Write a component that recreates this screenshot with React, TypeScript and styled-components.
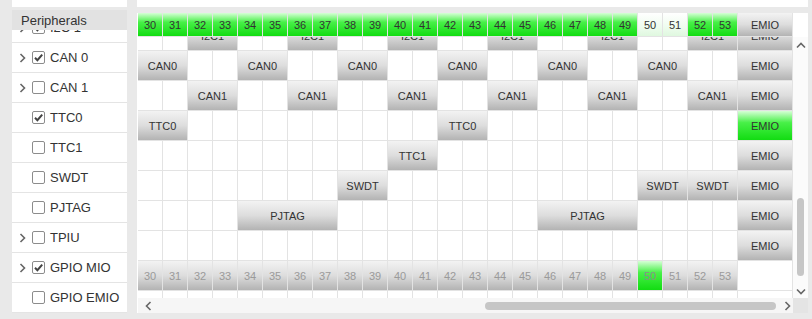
import styled, { createGlobalStyle, css } from "styled-components";

type Tone = "gray" | "green" | "pale" | "muted" | "mutedGreen";

type Seg = {
  at: number;
  span: number;
  label: string;
  tone?: Tone;
};

type GridRow = {
  segs: Seg[];
  emio: Tone | null;
};

type Periph = {
  name: string;
  checked: boolean;
  expandable: boolean;
};

const FIRST_PIN = 30;
const PIN_COUNT = 24;
const pins = Array.from({ length: PIN_COUNT }, (_, i) => FIRST_PIN + i);

const pairs = (start: number, label: string): Seg[] =>
  [0, 4, 8, 12, 16, 20].map((o) => ({ at: start + o, span: 2, label }));

const gridRows: GridRow[] = [
  { segs: pairs(32, "I2C1"), emio: "gray" },
  { segs: pairs(30, "CAN0"), emio: "gray" },
  { segs: pairs(32, "CAN1"), emio: "gray" },
  {
    segs: [
      { at: 30, span: 2, label: "TTC0" },
      { at: 42, span: 2, label: "TTC0" },
    ],
    emio: "green",
  },
  { segs: [{ at: 40, span: 2, label: "TTC1" }], emio: "gray" },
  {
    segs: [
      { at: 38, span: 2, label: "SWDT" },
      { at: 50, span: 2, label: "SWDT" },
      { at: 52, span: 2, label: "SWDT" },
    ],
    emio: "gray",
  },
  {
    segs: [
      { at: 34, span: 4, label: "PJTAG" },
      { at: 46, span: 4, label: "PJTAG" },
    ],
    emio: "gray",
  },
  { segs: [], emio: "gray" },
  {
    segs: pins.map((p) => ({
      at: p,
      span: 1,
      label: String(p),
      tone: p === 50 ? "mutedGreen" : "muted",
    })),
    emio: null,
  },
  { segs: [], emio: null },
];

const peripherals: Periph[] = [
  { name: "I2C 1", checked: true, expandable: true },
  { name: "CAN 0", checked: true, expandable: true },
  { name: "CAN 1", checked: false, expandable: true },
  { name: "TTC0", checked: true, expandable: false },
  { name: "TTC1", checked: false, expandable: false },
  { name: "SWDT", checked: false, expandable: false },
  { name: "PJTAG", checked: false, expandable: false },
  { name: "TPIU", checked: false, expandable: true },
  { name: "GPIO MIO", checked: true, expandable: true },
  { name: "GPIO EMIO", checked: false, expandable: false },
];

const GlobalStyle = createGlobalStyle`
  html, body {
    margin: 0;
    padding: 0;
    background: #e9e9e9;
  }
  body {
    font-family: "Liberation Sans", Arial, sans-serif;
    color: #333;
  }
  * {
    box-sizing: border-box;
  }
`;

const Page = styled.div`
  display: flex;
  width: 812px;
  height: 319px;
  padding-left: 12px;
  background: #e9e9e9;
  overflow: hidden;
`;

const Sidebar = styled.div`
  display: flex;
  flex-direction: column;
  width: 115px;
  margin-right: 10px;
`;

const TopStrip = styled.div<{ $gap: number }>`
  height: 7px;
  flex-shrink: 0;
  background: #fff;
  margin-bottom: ${(p) => p.$gap}px;
`;

const SideHeader = styled.div`
  height: 20px;
  flex-shrink: 0;
  padding-left: 9px;
  display: flex;
  align-items: center;
  font-size: 13px;
  background: #e2e2e2;
  color: #333;
  position: relative;
  z-index: 1;
`;

const SideList = styled.div`
  height: 283px;
  background: #fff;
  overflow: hidden;
`;

const SideRows = styled.div`
  margin-top: -17px;
`;

const SideRow = styled.div`
  height: 30px;
  display: flex;
  align-items: center;
  padding-left: 7px;
  border-bottom: 1px solid #e4e4e4;
  font-size: 13px;
  color: #333;
`;

const ChevronSlot = styled.span`
  width: 13px;
  display: flex;
  align-items: center;
`;

const Box = styled.span`
  width: 13px;
  height: 13px;
  border: 1px solid #8c8c8c;
  border-radius: 2px;
  background: #fff;
  display: flex;
  align-items: center;
  justify-content: center;
  margin-right: 5px;
  flex-shrink: 0;
`;

const Main = styled.div`
  display: flex;
  flex-direction: column;
  width: 671px;
`;

const Panel = styled.div`
  display: flex;
  flex-direction: column;
  height: 300px;
  padding-left: 1px;
  background: #fff;
`;

const HeadLine = styled.div`
  display: flex;
  height: 24px;
  position: relative;
  z-index: 1;
`;

const Middle = styled.div`
  display: flex;
  height: 261px;
`;

const Viewport = styled.div`
  width: 655px;
  overflow: hidden;
`;

const Rows = styled.div`
  margin-top: -16px;
`;

const Row = styled.div<{ $h: number }>`
  display: grid;
  grid-template-columns: repeat(${PIN_COUNT}, 25px) 55px;
  height: ${(p) => p.$h}px;
`;

const tones: Record<Tone, ReturnType<typeof css>> = {
  gray: css`
    background: linear-gradient(#f3f3f3 0%, #dddddd 50%, #b3b3b3 100%);
    color: #333;
  `,
  green: css`
    background: linear-gradient(#d6ffd6 0%, #48f048 40%, #12dc12 100%);
    color: #333;
  `,
  pale: css`
    background: linear-gradient(#ffffff 0%, #eefcee 60%, #dff8df 100%);
    color: #333;
  `,
  muted: css`
    background: linear-gradient(#f3f3f3 0%, #dddddd 50%, #b3b3b3 100%);
    color: #9a9a9a;
  `,
  mutedGreen: css`
    background: linear-gradient(#d6ffd6 0%, #48f048 40%, #12dc12 100%);
    color: #8c8c8c;
  `,
};

const Cell = styled.div<{ $span?: number; $tone?: Tone | null }>`
  grid-column: span ${(p) => p.$span ?? 1};
  display: flex;
  align-items: center;
  justify-content: center;
  font-size: 11px;
  border-right: 1px solid #e3e3e3;
  border-bottom: 1px solid #e3e3e3;
  background: #fff;
  white-space: nowrap;
  overflow: hidden;
  ${(p) => p.$tone && tones[p.$tone]}
`;

const VScroll = styled.div`
  width: 15px;
  display: flex;
  flex-direction: column;
  align-items: center;
  background: #fbfbfb;
  padding: 5px 0 3px;
`;

const VThumb = styled.div`
  width: 7px;
  height: 78px;
  border-radius: 4px;
  background: #c6c6c6;
  margin-top: auto;
  margin-bottom: 12px;
`;

const Bottom = styled.div`
  display: flex;
  height: 15px;
`;

const HScroll = styled.div`
  width: 655px;
  display: flex;
  align-items: center;
  padding: 0 2px 0 7px;
  background: #f6f6f6;
`;

const HThumb = styled.div`
  width: 291px;
  height: 8px;
  border-radius: 4px;
  background: #c6c6c6;
  margin-left: auto;
  margin-right: 8px;
`;

const Corner = styled.div`
  width: 15px;
  background: #e4e4e4;
`;

const Chevron = ({ dir }: { dir: "up" | "down" | "left" | "right" }) => {
  const pts = {
    right: "1.5,1 5.5,5 1.5,9",
    left: "5.5,1 1.5,5 5.5,9",
    up: "1,5.5 5,1.5 9,5.5",
    down: "1,1.5 5,5.5 9,1.5",
  }[dir];
  const horiz = dir === "left" || dir === "right";
  return (
    <svg width={horiz ? 7 : 10} height={horiz ? 10 : 7} viewBox={horiz ? "0 0 7 10" : "0 0 10 7"}>
      <polyline points={pts} fill="none" stroke="#666" strokeWidth={1.6} />
    </svg>
  );
};

const Check = () => (
  <svg width="11" height="11" viewBox="0 0 11 11">
    <path d="M2 5.8 L4.4 8.2 L9.2 2.6" fill="none" stroke="#444" strokeWidth={2} />
  </svg>
);

const GridLine = ({ row, h }: { row: GridRow; h: number }) => {
  const cells = [];
  let p = FIRST_PIN;
  while (p < FIRST_PIN + PIN_COUNT) {
    const seg = row.segs.find((s) => s.at === p);
    if (seg) {
      cells.push(
        <Cell key={p} $span={seg.span} $tone={seg.tone ?? "gray"}>
          {seg.label}
        </Cell>
      );
      p += seg.span;
    } else {
      cells.push(<Cell key={p} />);
      p += 1;
    }
  }
  return (
    <Row $h={h}>
      {cells}
      <Cell $tone={row.emio}>{row.emio ? "EMIO" : ""}</Cell>
    </Row>
  );
};

const headerRow: GridRow = {
  segs: pins.map((p) => ({
    at: p,
    span: 1,
    label: String(p),
    tone: p === 50 || p === 51 ? "pale" : "green",
  })),
  emio: "gray",
};

const App = () => {
  return (
    <Page>
      <GlobalStyle />
      <Sidebar>
        <TopStrip $gap={3} />
        <SideHeader>Peripherals</SideHeader>
        <SideList>
          <SideRows>
            {peripherals.map((p) => (
              <SideRow key={p.name}>
                <ChevronSlot>{p.expandable && <Chevron dir="right" />}</ChevronSlot>
                <Box>{p.checked && <Check />}</Box>
                {p.name}
              </SideRow>
            ))}
          </SideRows>
        </SideList>
      </Sidebar>
      <Main>
        <TopStrip $gap={6} />
        <Panel>
          <HeadLine>
            <GridLine row={headerRow} h={24} />
          </HeadLine>
          <Middle>
            <Viewport>
              <Rows>
                {gridRows.map((r, i) => (
                  <GridLine key={i} row={r} h={30} />
                ))}
              </Rows>
            </Viewport>
            <VScroll>
              <Chevron dir="up" />
              <VThumb />
              <Chevron dir="down" />
            </VScroll>
          </Middle>
          <Bottom>
            <HScroll>
              <Chevron dir="left" />
              <HThumb />
              <Chevron dir="right" />
            </HScroll>
            <Corner />
          </Bottom>
        </Panel>
      </Main>
    </Page>
  );
};

export default App;
